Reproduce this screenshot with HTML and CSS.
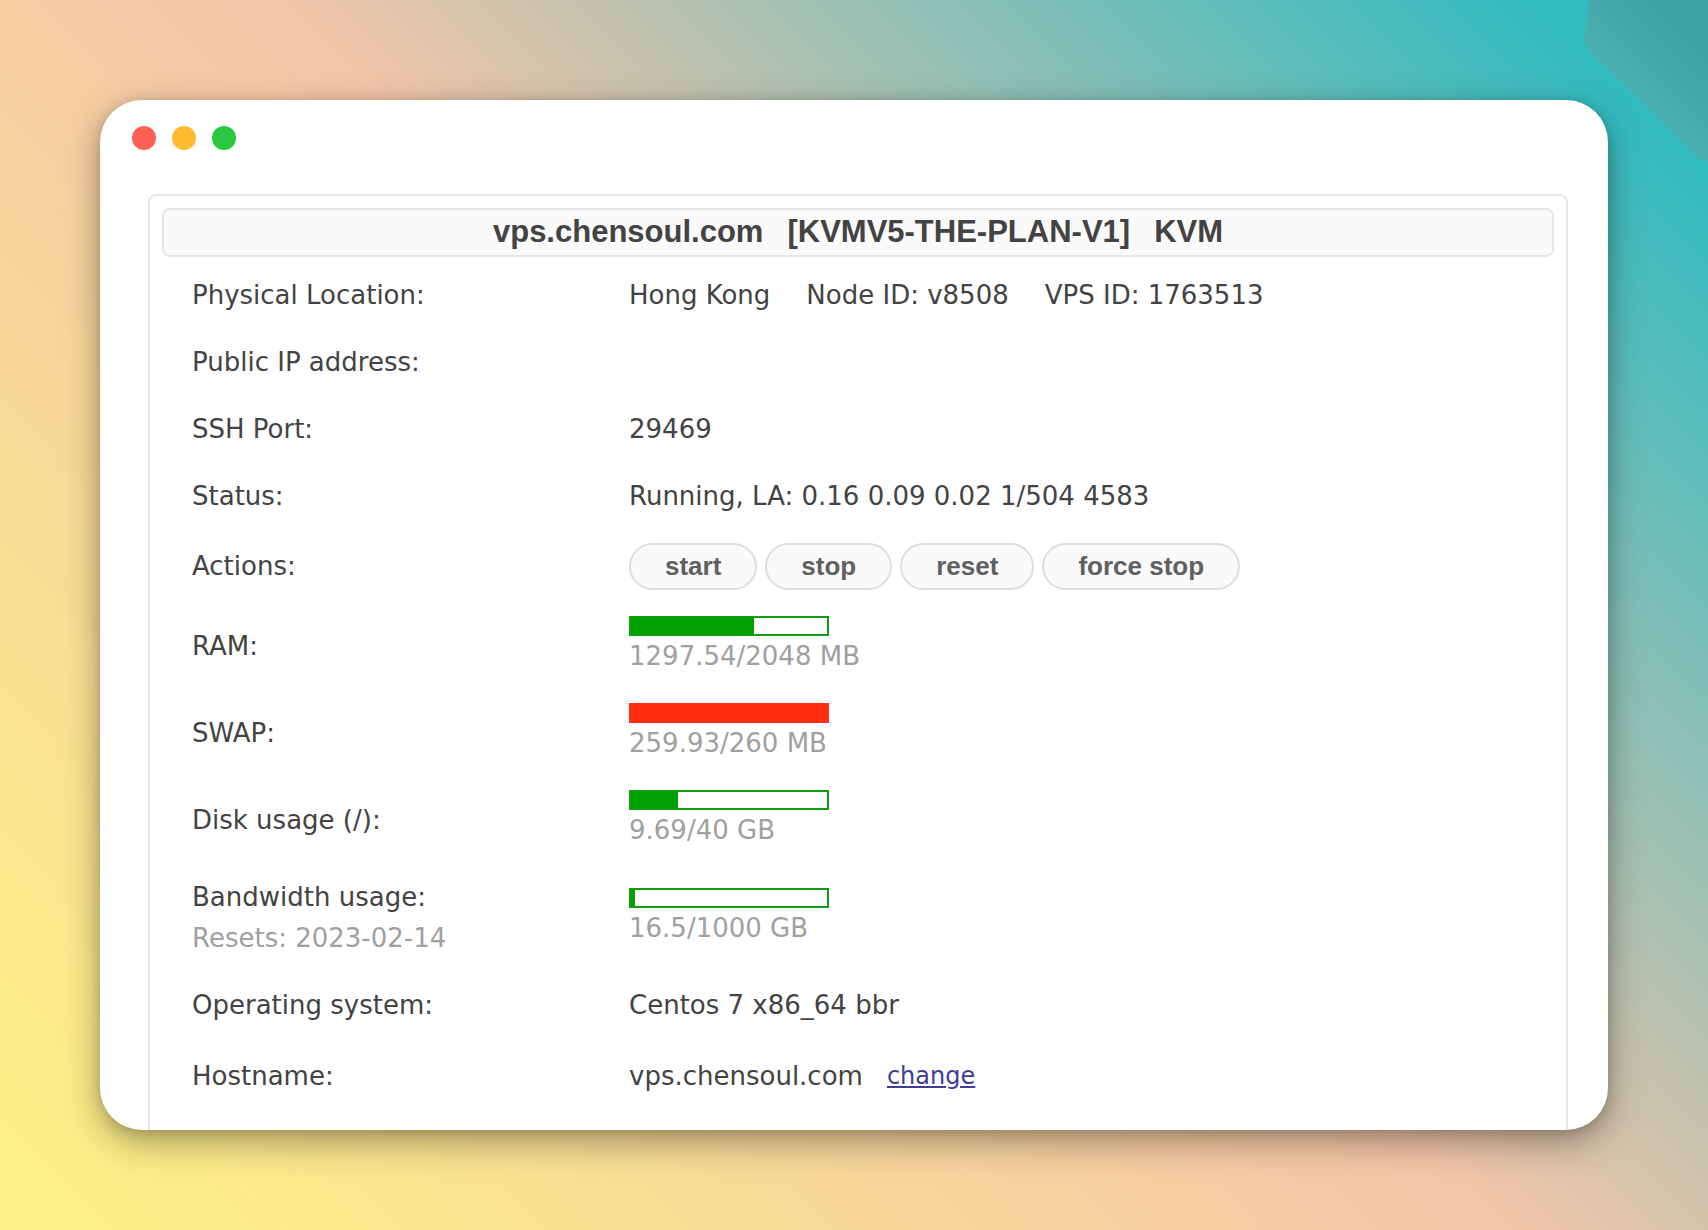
FILE: index.html
```html
<!DOCTYPE html>
<html lang="en">
<head>
<meta charset="utf-8">
<title>vps.chensoul.com</title>
<link rel="stylesheet" href="styles.css">
</head>
<body>
<main class="window">
  <div class="traffic-lights">
    <span class="light light-close"></span>
    <span class="light light-minimize"></span>
    <span class="light light-zoom"></span>
  </div>
  <section class="panel">
    <h1 class="panel-title"><span>vps.chensoul.com</span><span>[KVMV5-THE-PLAN-V1]</span><span>KVM</span></h1>
    <table class="details">
      <tbody>
        <tr>
          <th scope="row">Physical Location:</th>
          <td><div class="facts"><span>Hong Kong</span><span>Node ID: v8508</span><span>VPS ID: 1763513</span></div></td>
        </tr>
        <tr>
          <th scope="row">Public IP address:</th>
          <td></td>
        </tr>
        <tr>
          <th scope="row">SSH Port:</th>
          <td>29469</td>
        </tr>
        <tr>
          <th scope="row">Status:</th>
          <td>Running, LA: 0.16 0.09 0.02 1/504 4583</td>
        </tr>
        <tr>
          <th scope="row">Actions:</th>
          <td>
            <div class="actions">
              <button type="button">start</button>
              <button type="button">stop</button>
              <button type="button">reset</button>
              <button type="button">force stop</button>
            </div>
          </td>
        </tr>
        <tr>
          <th scope="row">RAM:</th>
          <td>
            <div class="meter"><div class="meter-fill" style="width: 63%"></div></div>
            <div class="muted">1297.54/2048 MB</div>
          </td>
        </tr>
        <tr>
          <th scope="row">SWAP:</th>
          <td>
            <div class="meter meter-full"><div class="meter-fill" style="width: 100%"></div></div>
            <div class="muted">259.93/260 MB</div>
          </td>
        </tr>
        <tr>
          <th scope="row">Disk usage (/):</th>
          <td>
            <div class="meter"><div class="meter-fill" style="width: 24%"></div></div>
            <div class="muted">9.69/40 GB</div>
          </td>
        </tr>
        <tr>
          <th scope="row">Bandwidth usage:<div class="muted">Resets: 2023-02-14</div></th>
          <td>
            <div class="meter"><div class="meter-fill" style="width: 2%"></div></div>
            <div class="muted">16.5/1000 GB</div>
          </td>
        </tr>
        <tr>
          <th scope="row">Operating system:</th>
          <td>Centos 7 x86_64 bbr</td>
        </tr>
        <tr class="row-tall">
          <th scope="row">Hostname:</th>
          <td><div class="hostname"><span>vps.chensoul.com</span><a href="#change">change</a></div></td>
        </tr>
      </tbody>
    </table>
  </section>
</main>
</body>
</html>
```
FILE: styles.css
```css
* {
  box-sizing: border-box;
}

body {
  position: relative;
  display: flex;
  min-height: 100vh;
  margin: 0;
  padding: 100px;
  background: linear-gradient(45deg, #fdf086 3%, #f5c5a8 51%, #30bbc0 94%);
  color: #434343;
  font-family: "DejaVu Sans", Verdana, sans-serif;
  font-size: 26px;
  line-height: 41px;
}

/* Shaded facet in the corner of the backdrop */
body::before {
  content: "";
  position: absolute;
  top: 0;
  right: 0;
  width: 124px;
  height: 162px;
  background: linear-gradient(45deg, #4fb4b3 30%, #3fa2a4 80%);
  clip-path: polygon(5px 0, 100% 0, 100% 100%, 112px 156px, 60px 104px, 6px 52px, 0 42px);
}

.window {
  display: flex;
  flex: 1;
  flex-direction: column;
  gap: 44px;
  min-width: 0;
  padding: 26px 40px 0 48px;
  border-radius: 42px;
  background: #fff;
  box-shadow: 0 12px 36px rgba(0, 0, 0, 0.35), 0 2px 12px rgba(0, 0, 0, 0.15);
}

.traffic-lights {
  display: flex;
  gap: 16px;
  margin-left: -16px;
}

.light {
  width: 24px;
  height: 24px;
  border-radius: 50%;
}

.light-close {
  background: #ff5f57;
}

.light-minimize {
  background: #febc2e;
}

.light-zoom {
  background: #28c840;
}

.panel {
  flex: 1;
  padding: 12px 12px 0;
  border: 2px solid #e6e6e6;
  border-bottom: 0;
  border-radius: 8px 8px 0 0;
}

.panel-title {
  display: flex;
  justify-content: center;
  gap: 24px;
  margin: 0 0 5px;
  padding-bottom: 1px;
  border: 2px solid #e6e6e6;
  border-radius: 8px;
  background: #fafafa;
  font: bold 31px/44px "Liberation Sans", Arial, sans-serif;
}

.details {
  width: 100%;
  border-collapse: collapse;
  table-layout: fixed;
}

.details th,
.details td {
  height: 67px;
  padding: 13px 0;
  font-weight: normal;
  text-align: left;
  vertical-align: middle;
}

.details th {
  width: 467px;
  padding-left: 30px;
}

.details .row-tall th,
.details .row-tall td {
  height: 74px;
}

.facts {
  display: flex;
  gap: 36px;
}

.hostname {
  display: flex;
  gap: 24px;
}

.hostname a {
  color: #403c96;
  font-size: 24px;
}

.muted {
  color: #a0a0a0;
}

.actions {
  display: flex;
  gap: 8px;
}

.actions button {
  height: 47px;
  padding: 0 34px;
  border: 2px solid #dedede;
  border-radius: 24px;
  background: #fafafa;
  color: #606060;
  font: bold 26px/43px "Liberation Sans", Arial, sans-serif;
}

.meter {
  width: 200px;
  height: 20px;
  border: 2px solid #109c10;
}

.meter-fill {
  height: 100%;
  background: #00a000;
}

.meter-full {
  border-color: #ff2e12;
}

.meter-full .meter-fill {
  background: #ff2e12;
}
```
